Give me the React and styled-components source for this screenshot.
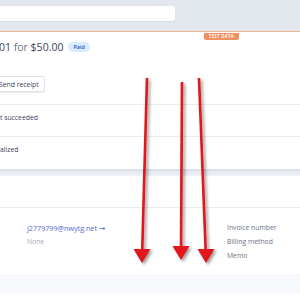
import React from 'react';
import styled, { createGlobalStyle } from 'styled-components';

const GlobalStyle = createGlobalStyle`
    html, body {
        margin: 0;
        padding: 0;
        background: #ffffff;
        overflow: hidden;
    }
    body {
        font-family: "Open Sans", "Liberation Sans", sans-serif;
        color: #3c4257;
    }
`

const Page = styled.div`
    position: relative;
    width: 300px;
    height: 300px;
    overflow: hidden;
    background: #ffffff;
`

const TopBar = styled.div`
    height: 32px;
    box-sizing: border-box;
    padding-top: 6px;
    background: #e3e8ee;
    border-bottom: 1px solid #f0b394;
`

const SearchInput = styled.div`
    width: 175px;
    height: 15px;
    background: #ffffff;
    border-radius: 0 3px 3px 0;
    box-shadow: 0 1px 1px rgba(60, 66, 87, 0.08);
`

const TestBadge = styled.div`
    position: absolute;
    top: 33px;
    left: 204px;
    width: 35px;
    height: 7px;
    background: #ef8f62;
    border-radius: 0 0 2px 2px;
    color: #fff4ee;
    font-size: 4.5px;
    font-weight: 700;
    letter-spacing: 0.2px;
    line-height: 7px;
    text-align: center;
`

const Card = styled.div`
    background: #ffffff;
`

const Header = styled.div`
    display: flex;
    align-items: center;
    gap: 5px;
    padding-top: 8px;
    height: 14px;
`

const Title = styled.div`
    font-size: 10.5px;
    line-height: 14px;
    color: #3c4257;
    margin-left: -1px;
    span {
        color: #697386;
    }
`

const StatusPill = styled.div`
    height: 10px;
    padding: 0 5px;
    border-radius: 5px;
    background: #d6ecff;
    color: #3d4eac;
    font-size: 5.5px;
    font-weight: 600;
    line-height: 10px;
`

const Actions = styled.div`
    display: flex;
    padding: 22px 0 12px;
    border-bottom: 1px solid #ebeef1;
`

const Button = styled.div`
    display: flex;
    align-items: center;
    height: 16px;
    box-sizing: border-box;
    padding: 0 5px 0 0;
    margin-left: -1px;
    border: 1px solid #e0e4ea;
    border-left: none;
    border-radius: 0 3px 3px 0;
    box-shadow: 0 1px 1px rgba(60, 66, 87, 0.1);
    font-size: 6.8px;
    font-weight: 500;
    color: #3c4257;
`

const EventRow = styled.div`
    height: 32px;
    box-sizing: border-box;
    padding-top: 8px;
    font-size: 6.8px;
    line-height: 10px;
    color: #3c4257;
    border-bottom: ${props => props.last ? 'none' : '1px solid #ebeef1'};
`

const Gap = styled.div`
    height: 7px;
    background: linear-gradient(#d5dbe3, #e6ebf1 40%, #eef1f5);
`

const SectionHead = styled.div`
    height: 31px;
    border-bottom: 1px solid #ebeef1;
`

const Details = styled.div`
    display: grid;
    grid-template-columns: 200px 1fr;
    padding: 13px 0 0 27px;
`

const Column = styled.div`
    display: flex;
    flex-direction: column;
`

const Line = styled.div`
    height: 14px;
    line-height: 14px;
    font-size: ${props => props.size || '6.8px'};
    color: ${props => props.color || '#697386'};
    white-space: nowrap;
`

const LinkArrow = styled.span`
    font-family: "DejaVu Sans", sans-serif;
    font-size: 7.5px;
    margin-left: 2px;
`

const Band = styled.div`
    margin-top: 11px;
    height: 19px;
    background: #f6f8fb;
`

const Overlay = styled.svg`
    position: absolute;
    top: 0;
    left: 0;
    pointer-events: none;
`

const arrows = [
    { x1: 147, y1: 78, x2: 142, y2: 263 },
    { x1: 182, y1: 82, x2: 181, y2: 260 },
    { x1: 199, y1: 78, x2: 206, y2: 263 },
]

const Arrow = ({ x1, y1, x2, y2 }) => {
    const hw = 8.5;
    const hl = 14;
    return (
        <g>
            <line x1={x1} y1={y1} x2={x2 - (x2 - x1) * 0.05} y2={y2 - hl + 1} stroke="#e3121b" strokeWidth="2.6" />
            <polygon points={`${x2 - hw},${y2 - hl} ${x2 + hw},${y2 - hl} ${x2},${y2}`} fill="#e3121b" />
        </g>
    )
}

const App = () => {
    return (
        <Page>
            <GlobalStyle />
            <TopBar>
                <SearchInput />
            </TopBar>
            <TestBadge>TEST DATA</TestBadge>
            <Card>
                <Header>
                    <Title>01 <span>for</span> $50.00</Title>
                    <StatusPill>Paid</StatusPill>
                </Header>
                <Actions>
                    <Button>Send receipt</Button>
                </Actions>
                <EventRow>t succeeded</EventRow>
                <EventRow last>alized</EventRow>
            </Card>
            <Gap />
            <SectionHead />
            <Details>
                <Column>
                    <Line color="#5469d4" size="7.2px">j2779799@nwytg.net<LinkArrow>→</LinkArrow></Line>
                    <Line color="#a3acb9">None</Line>
                </Column>
                <Column>
                    <Line>Invoice number</Line>
                    <Line>Billing method</Line>
                    <Line>Memo</Line>
                </Column>
            </Details>
            <Band />
            <Overlay width="300" height="300" viewBox="0 0 300 300">
                <defs>
                    <filter id="shade" x="-50%" y="-10%" width="200%" height="120%">
                        <feDropShadow dx="2" dy="2" stdDeviation="1.8" floodColor="#000" floodOpacity="0.4" />
                    </filter>
                </defs>
                <g filter="url(#shade)">
                    {arrows.map((a, i) => <Arrow key={i} {...a} />)}
                </g>
            </Overlay>
        </Page>
    )
}

export default App;
